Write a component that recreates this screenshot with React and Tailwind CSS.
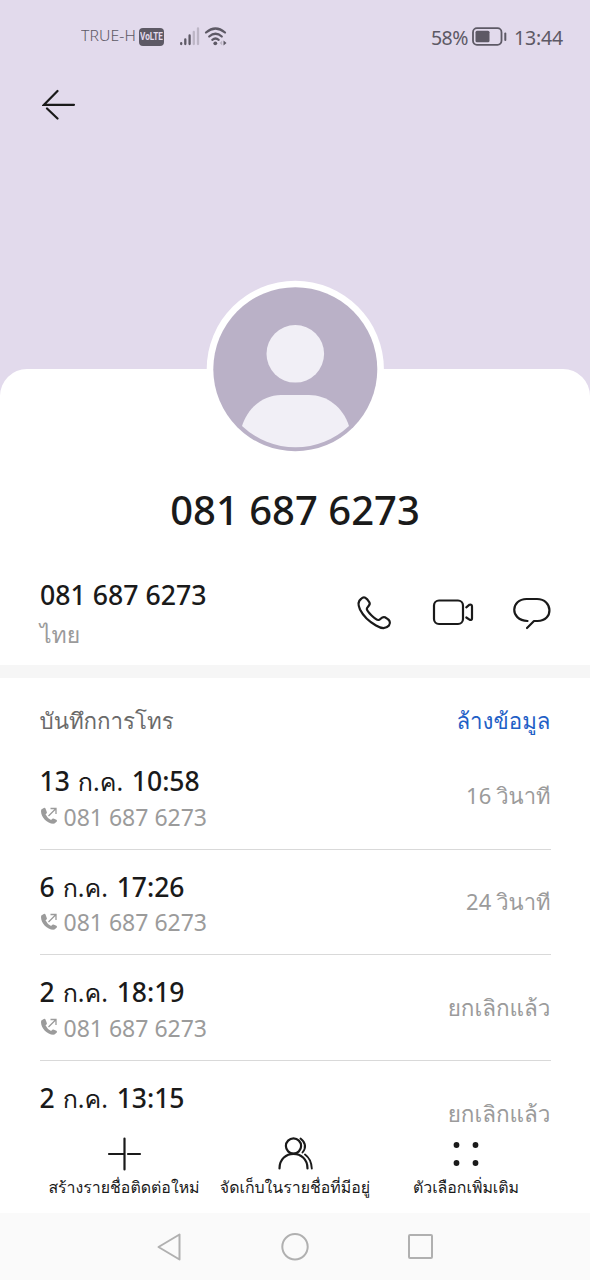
const FONT = "font-['Noto_Sans','Loma',sans-serif]";

function Status() {
  return (
    <div className="flex h-[74px] items-center pr-[27px] pl-[81px] text-[#5d5965]">
      <span className="mb-[4px] w-[56px] text-[15px] leading-[20px] tracking-[0.1px] whitespace-nowrap">
        <span className="inline-block origin-left scale-x-[1.05] font-light">TRUE-H</span>
      </span>
      <span className="ml-[2px] flex h-[18px] w-[25px] items-center justify-center rounded-[4px] bg-[#5d5965] font-['Roboto',sans-serif] text-[11px] leading-[18px] font-bold text-[#e2daec]">
        <span className="inline-block scale-x-[0.74]">VoLTE</span>
      </span>
      <svg className="ml-[16px]" width="50" height="20" viewBox="0 0 50 20" fill="none">
        <g strokeWidth="2.300" strokeLinecap="round">
          <path d="M1.200 16.2v.8M5.300 12.500V17M9.600 8.500V17" stroke="#5d5965" />
          <path d="M13.800 5V17M18 1.500V17" stroke="#bdb6c6" />
        </g>
        <g stroke="#5d5965" strokeWidth="2.200" strokeLinecap="round">
          <path d="M26 5.500Q35.500-2.500 45 5.500" />
          <path d="M29.200 9.500Q35.500 4 41.800 9.500" />
          <path d="M32.300 12.800Q35.500 10.200 38.700 12.800" />
        </g>
        <circle cx="35.300" cy="16.300" r="1.900" fill="#5d5965" />
        <path d="M43.500 13.500v5l3-2.500z" fill="#5d5965" />
        <path d="M42.200 13.500v5l-2.600-2.500z" fill="#bdb6c6" />
      </svg>
      <span className="mt-[2px] ml-auto text-[19.500px] leading-[24px] tracking-[-0.5px]">58%</span>
      <svg className="ml-[4px]" width="36" height="20" viewBox="0 0 36 20" fill="none">
        <rect x="1" y="1.200" width="28.500" height="16.600" rx="4" stroke="#5d5965" strokeWidth="1.800" />
        <rect x="3.500" y="3.800" width="14" height="11.400" rx="1.500" fill="#5d5965" />
        <path d="M33.300 6.500v6.500" stroke="#5d5965" strokeWidth="2" strokeLinecap="round" />
      </svg>
      <span className="mt-[2px] ml-[6px] text-[19.500px] leading-[24px] tracking-[-0.150px]">13:44</span>
    </div>
  );
}

function Avatar() {
  return (
    <svg className="absolute top-[280px] left-[206px]" width="179" height="178" viewBox="206 280 179 178">
      <circle cx="295.300" cy="369.300" r="88.600" fill="#fff" />
      <circle cx="295.300" cy="369.200" r="82" fill="#bab1c7" />
      <circle cx="295.300" cy="353.800" r="28.800" fill="#f1eff6" />
      <path d="M242 426C248 407 264 395 281 395h28c18 0 34 12 40 31a78 78 0 0 1-107 0z" fill="#f1eff6" />
    </svg>
  );
}

function Call({ day, time, count, result, last }) {
  return (
    <li className={last ? "flex h-[106px] justify-between" : "flex h-[105.600px] justify-between border-b border-[#d9d9d9]"}>
      <div className="pt-[19px]">
        <div className="flex h-[36px] items-baseline gap-[8px] text-[26.500px] leading-[36px] font-medium whitespace-nowrap text-[#1a1a1a]">
          <span>{day}</span>
          <span className="w-[46px] text-[25px] font-normal">ก.ค.</span>
          <span>{time}</span>
        </div>
        {!last && (
          <div className="flex h-[36px] items-center text-[23px] text-[#9b9b9b]">
            <svg className="mr-[6px] mb-[2px]" width="18" height="18" viewBox="0 0 18 18" fill="none">
              <path d="M3.800 1 1.300 2.500C-.5 8.500 7 17.500 14.500 16.600l2.300-2.200q.5-1-.4-1.700l-3-1.200q-.8-.3-1.400.4l-.9 1.200Q7.500 11.500 5.500 7.300l1-.9q.6-.6.3-1.400L5.600 1.700Q5 .5 3.800 1z" fill="#9b9b9b" />
              <path d="M8.500 9 15.500 2M10.500 1.500h5.500V7" stroke="#9b9b9b" strokeWidth="1.300" />
            </svg>
            <span>081 687 6273</span>
          </div>
        )}
      </div>
      <span className={count ? "flex h-[34px] items-baseline gap-[5px] pt-[34px] text-[22px] leading-[34px] text-[#9b9b9b]" : "flex h-[34px] items-baseline pt-[36px] text-[22.500px] leading-[34px] text-[#9b9b9b]"}>
        {count && <span>{count}</span>}
        <span>{result}</span>
      </span>
    </li>
  );
}

function Action({ label, children }) {
  return (
    <button className="flex w-[171px] flex-col items-center">
      {children}
      <span className="mt-[2px] text-[15.900px] leading-[26px] whitespace-nowrap text-[#1a1a1a]">{label}</span>
    </button>
  );
}

export default function App() {
  return (
    <div className={`relative flex h-[1280px] w-[590px] flex-col overflow-hidden bg-[#e2daec] ${FONT}`}>
      <header className="h-[369px] shrink-0">
        <Status />
        <svg className="mt-[14px] ml-[42px]" width="34" height="34" viewBox="0 0 34 34" fill="none" stroke="#1a1a1a" strokeWidth="2.200" strokeLinecap="round">
          <path d="M15.500 3 2 16.800H32M5 20.500 15.500 30.500" />
        </svg>
      </header>
      <Avatar />
      <main className="flex h-[844px] shrink-0 flex-col overflow-hidden rounded-t-[27px] bg-white">
        <h1 className="mt-[112px] text-center text-[40px] leading-[58px] font-medium text-[#1a1a1a]">081 687 6273</h1>
        <section className="flex h-[126px] shrink-0 justify-between pr-[39px] pl-[40px]">
          <div className="pt-[38px]">
            <p className="text-[26.700px] leading-[36px] font-medium text-[#1a1a1a]">081 687 6273</p>
            <p className="mt-[4px] text-[23px] leading-[34px] text-[#9b9b9b]">ไทย</p>
          </div>
          <svg className="mt-[54px]" width="196" height="40" viewBox="355 593 196 40" fill="none" stroke="#1a1a1a" strokeWidth="2.200" strokeLinecap="round" strokeLinejoin="round">
            <path d="M361 599C364 596 366.500 597.500 369.500 602.500 371 605 366.800 607 366.800 609 367.500 612 375 619.500 378.500 620 380.500 620 381.500 616 385 617.200 390 620 391 622.500 389 625.500 385.500 629.500 381 628.500 376 625.500 369 621.500 363 615.500 360 609.500 358 605 357.500 601.500 361 599z" />
            <rect x="434" y="600.500" width="29" height="23.500" rx="5" />
            <path d="M466.300 607.300 469.500 604.700Q472 604 472 606.500V618.500Q472 620.500 469.500 619.700L466.300 617.500" />
            <path d="M527.500 621C509 620 511 599 526.500 599H537C553 599 554 621 537.500 621H534L527 628" />
          </svg>
        </section>
        <div className="h-[13px] shrink-0 bg-[#f6f6f6]" />
        <section className="flex h-[534px] flex-col px-[39.500px] pt-[24px]">
          <div className="flex h-[42px] shrink-0 items-start justify-between text-[22.300px] leading-[38px]">
            <h2 className="text-[#6a6a6a]">บันทึกการโทร</h2>
            <button className="text-[#1f60c6]">ล้างข้อมูล</button>
          </div>
          <ul className="h-[385px] shrink-0 overflow-hidden">
            <Call day="13" time="10:58" count="16" result="วินาที" />
            <Call day="6" time="17:26" count="24" result="วินาที" />
            <Call day="2" time="18:19" result="ยกเลิกแล้ว" />
            <Call day="2" time="13:15" result="ยกเลิกแล้ว" last />
          </ul>
          <div className="-mx-[1px] flex h-[83px] shrink-0 pt-[7px]">
            <Action label="สร้างรายชื่อติดต่อใหม่">
              <svg width="36" height="36" viewBox="0 0 36 36" fill="none" stroke="#1a1a1a" strokeWidth="2.200" strokeLinecap="round"><path d="M18.500 2.500V33.500M3 18H18.500M22 18H34" /></svg>
            </Action>
            <Action label="จัดเก็บในรายชื่อที่มีอยู่">
              <svg width="36" height="36" viewBox="0 0 36 36" fill="none" stroke="#1a1a1a" strokeWidth="2.200" strokeLinecap="round"><circle cx="16.500" cy="10" r="7.600" /><path d="M2.500 32.500C2.500 13 30.500 13 30.500 32.500" /><path d="M23.500 2.500Q31.500 9 25.500 16.500M28 18.500Q34.300 23 34.800 32.500" strokeWidth="1.900" /></svg>
            </Action>
            <Action label="ตัวเลือกเพิ่มเติม">
              <svg width="36" height="36" viewBox="0 0 36 36" fill="#1a1a1a"><circle cx="8.500" cy="9" r="2.900" /><circle cx="27.500" cy="9" r="2.900" /><circle cx="8.500" cy="27" r="2.900" /><circle cx="27.500" cy="27" r="2.900" /></svg>
            </Action>
          </div>
        </section>
      </main>
      <nav className="flex h-[67px] shrink-0 items-center justify-center gap-[98px] bg-[#fafafa]">
        <svg width="28" height="30" viewBox="0 0 28 30" fill="none" stroke="#b0b0b0" strokeWidth="2" strokeLinejoin="round"><path d="M24.500 2.500V27.500L3.500 15z" /></svg>
        <svg width="28" height="28" viewBox="0 0 28 28" fill="none" stroke="#b0b0b0" strokeWidth="2"><circle cx="14" cy="13.700" r="12.700" /></svg>
        <svg width="28" height="28" viewBox="0 0 28 28" fill="none" stroke="#b0b0b0" strokeWidth="2"><rect x="2" y="2" width="23" height="23" rx="1" /></svg>
      </nav>
    </div>
  );
}
